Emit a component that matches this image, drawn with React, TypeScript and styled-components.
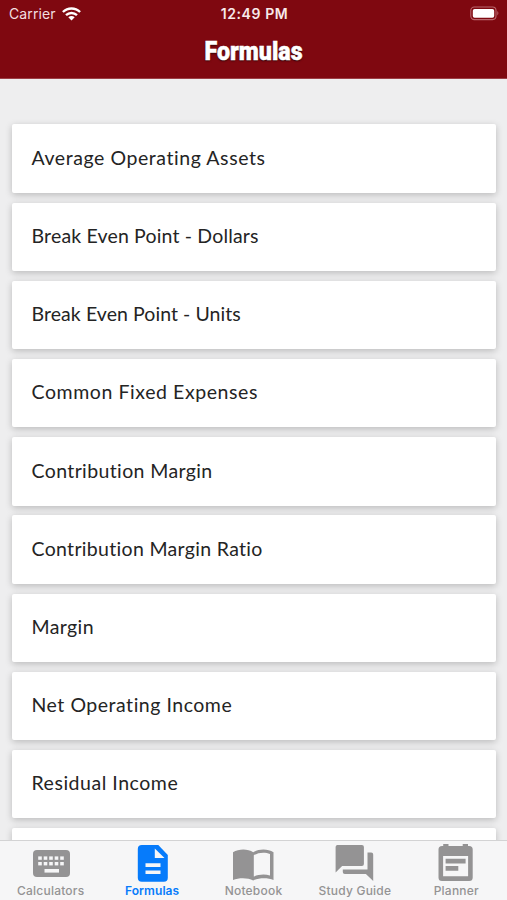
import React from "react";
import styled, { createGlobalStyle } from "styled-components";

const GlobalStyle = createGlobalStyle`
  * { box-sizing: border-box; }
  body { margin: 0; background: #eeeeef; }
`;

const Screen = styled.div`
  width: 507px;
  height: 900px;
  display: flex;
  flex-direction: column;
  overflow: hidden;
  background: #eeeeef;
  font-family: Inter, "Liberation Sans", sans-serif;
`;

const Header = styled.header`
  flex: none;
  height: 79px;
  background: #7f0810;
  border-bottom: 1px solid #9c3f46;
  color: #fff;
`;

const StatusBar = styled.div`
  height: 27px;
  display: grid;
  grid-template-columns: 1fr auto 1fr;
  align-items: center;
  padding: 0 7px 0 9px;
`;

const Carrier = styled.div`
  display: flex;
  align-items: center;
  gap: 6px;
  font-size: 14px;
  line-height: 27px;
  letter-spacing: 0.12px;
  color: #f3dfe0;
`;

const Clock = styled.div`
  font-size: 14px;
  font-weight: 600;
  line-height: 27px;
  letter-spacing: 0.6px;
  color: #f8e9ea;
`;

const Battery = styled.svg`
  justify-self: end;
`;

const Title = styled.h1`
  margin: 0;
  height: 50px;
  line-height: 50px;
  text-align: center;
  font-family: Roboto, sans-serif;
  font-size: 25px;
  font-weight: 900;
  -webkit-text-stroke: 0.5px #fff;
  text-shadow: 0 1px 2px rgba(0, 0, 0, 0.75);
  transform: scaleX(0.93);
`;

const List = styled.main`
  flex: 1;
  min-height: 0;
  overflow: hidden;
  display: flex;
  flex-direction: column;
  gap: 9.8px;
  padding: 45.4px 11px 0 12px;
`;

const Card = styled.div`
  flex: none;
  height: 68.4px;
  display: flex;
  align-items: center;
  padding: 0 19.5px 1.6px;
  background: #fff;
  border-radius: 2px;
  box-shadow: 0 2px 7px rgba(0, 0, 0, 0.22);
`;

const CardLabel = styled.span<{ $tracking: number }>`
  font-family: Lato, sans-serif;
  font-size: 19.5px;
  line-height: 28px;
  letter-spacing: ${(p) => p.$tracking}px;
  white-space: nowrap;
  color: #242424;
`;

const TabBar = styled.nav`
  flex: none;
  height: 60px;
  display: grid;
  grid-template-columns: repeat(5, 1fr);
  background: #f6f6f7;
  border-top: 1px solid #d3d3d4;
`;

const Tab = styled.div<{ $active?: boolean }>`
  display: flex;
  flex-direction: column;
  align-items: center;
  color: ${(p) => (p.$active ? "#067bfb" : "#949394")};
  svg { display: block; height: 42px; }
`;

const TabLabel = styled.span<{ $active?: boolean }>`
  margin-top: 1px;
  font-size: 12px;
  line-height: 14px;
  font-weight: ${(p) => (p.$active ? 600 : 500)};
  letter-spacing: ${(p) => (p.$active ? 0.1 : 0.22)}px;
  white-space: nowrap;
`;

const formulas = [
  { name: "Average Operating Assets", tracking: 0.57 },
  { name: "Break Even Point - Dollars", tracking: 0.17 },
  { name: "Break Even Point - Units", tracking: 0.07 },
  { name: "Common Fixed Expenses", tracking: 0.58 },
  { name: "Contribution Margin", tracking: 0.38 },
  { name: "Contribution Margin Ratio", tracking: 0.32 },
  { name: "Margin", tracking: 0.4 },
  { name: "Net Operating Income", tracking: 0.52 },
  { name: "Residual Income", tracking: 0.53 },
  { name: "", tracking: 0 },
];

const keyColumns = [16, 21.5, 27, 32.5, 38];

const KeyboardIcon = () => (
  <svg width="54" height="42" viewBox="0 0 54 42">
    <rect x="9" y="9" width="37" height="27" rx="4" fill="currentColor" />
    <g fill="#f6f6f7">
      {keyColumns.map((x) => (
        <React.Fragment key={x}>
          <rect x={x - 1.8} y="15.4" width="3.6" height="3.4" />
          <rect x={x - 1.8} y="21" width="3.6" height="3.4" />
        </React.Fragment>
      ))}
      <rect x="20.5" y="28" width="14.5" height="3.6" />
    </g>
  </svg>
);

const DocumentIcon = () => (
  <svg width="54" height="42" viewBox="-0.8 0 54 42">
    <path d="M16 4h16.500L42 14v22.800a4 4 0 0 1-4 4H16a4 4 0 0 1-4-4V8a4 4 0 0 1 4-4z" fill="currentColor" />
    <path d="M29 7.500V17h9.700zM19.700 22.200h15v3.700h-15zM19.700 29.400h15v3.700h-15z" fill="#f6f6f7" />
  </svg>
);

const BookIcon = () => (
  <svg width="54" height="42" viewBox="0 0 54 42">
    <path
      fill="currentColor"
      fillRule="evenodd"
      d="M7 11.200C13 7.400 22 7.600 27.200 11.200 33 7.400 42 7.600 47.500 11.200V39C42 36.500 33 36.500 27.200 39.500 22 36.500 13 36.500 7 39zM27.800 14.200V35.500C32.500 33.300 39 32.800 44 34.500V13C39 10.800 32.500 11.300 27.800 14.200z"
    />
  </svg>
);

const ChatIcon = () => (
  <svg width="54" height="42" viewBox="1.200 0 54 42">
    <path
      fill="currentColor"
      d="M10.300 4h24.800a2 2 0 0 1 2 2v17a2 2 0 0 1-2 2H15.300L8.800 31.500V6a2 2 0 0 1 1.500-2zM40.700 11.500h3.700a2 2 0 0 1 2 2V40l-7.300-7H18a2 2 0 0 1-2-2v-2.500h24.700z"
    />
  </svg>
);

const CalendarIcon = () => (
  <svg width="54" height="42" viewBox="0.800 0 54 42">
    <path
      fill="currentColor"
      fillRule="evenodd"
      d="M15 2.900h5.300V5h14.200V2.900h5.300V5H41a3.500 3.500 0 0 1 3.500 3.500v28A3.500 3.500 0 0 1 41 40H13.800a3.500 3.500 0 0 1-3.500-3.500v-28A3.500 3.500 0 0 1 13.800 5H15zM14.900 15v20.300h25V15z"
    />
    <path fill="currentColor" d="M17.400 17.700h20v4.800h-20zM17.400 25h12.700v4.800H17.400z" />
  </svg>
);

const tabs = [
  { label: "Calculators", Icon: KeyboardIcon },
  { label: "Formulas", Icon: DocumentIcon, active: true },
  { label: "Notebook", Icon: BookIcon },
  { label: "Study Guide", Icon: ChatIcon },
  { label: "Planner", Icon: CalendarIcon },
];

export default function App() {
  return (
    <>
      <GlobalStyle />
      <Screen>
        <Header>
          <StatusBar>
            <Carrier>
              Carrier
              <svg width="19" height="14" viewBox="0 0 19 14">
                <g fill="none" stroke="#fff" strokeWidth="2.400">
                  <path d="M.9 5C5.800.3 13.200.3 18.100 5" />
                  <path d="M4 8.200c3.200-3 7.800-3 11 0" />
                </g>
                <path d="M6.300 10.300q3.200-2.500 6.400 0L9.500 13.600z" fill="#fff" />
              </svg>
            </Carrier>
            <Clock>12:49 PM</Clock>
            <Battery width="30" height="15" viewBox="0 0 30 15">
              <rect x=".8" y="1" width="25.200" height="12.600" rx="3.500" fill="none" stroke="#b9666c" strokeWidth="1.100" />
              <rect x="2.800" y="2.900" width="21.400" height="8.800" rx="1.800" fill="#fff" />
              <path d="M27.300 5q2.200 2.200 0 4.500z" fill="#b9666c" />
            </Battery>
          </StatusBar>
          <Title>Formulas</Title>
        </Header>
        <List>
          {formulas.map((f, i) => (
            <Card key={i}>
              <CardLabel $tracking={f.tracking}>{f.name}</CardLabel>
            </Card>
          ))}
        </List>
        <TabBar>
          {tabs.map(({ label, Icon, active }) => (
            <Tab key={label} $active={active}>
              <Icon />
              <TabLabel $active={active}>{label}</TabLabel>
            </Tab>
          ))}
        </TabBar>
      </Screen>
    </>
  );
}
